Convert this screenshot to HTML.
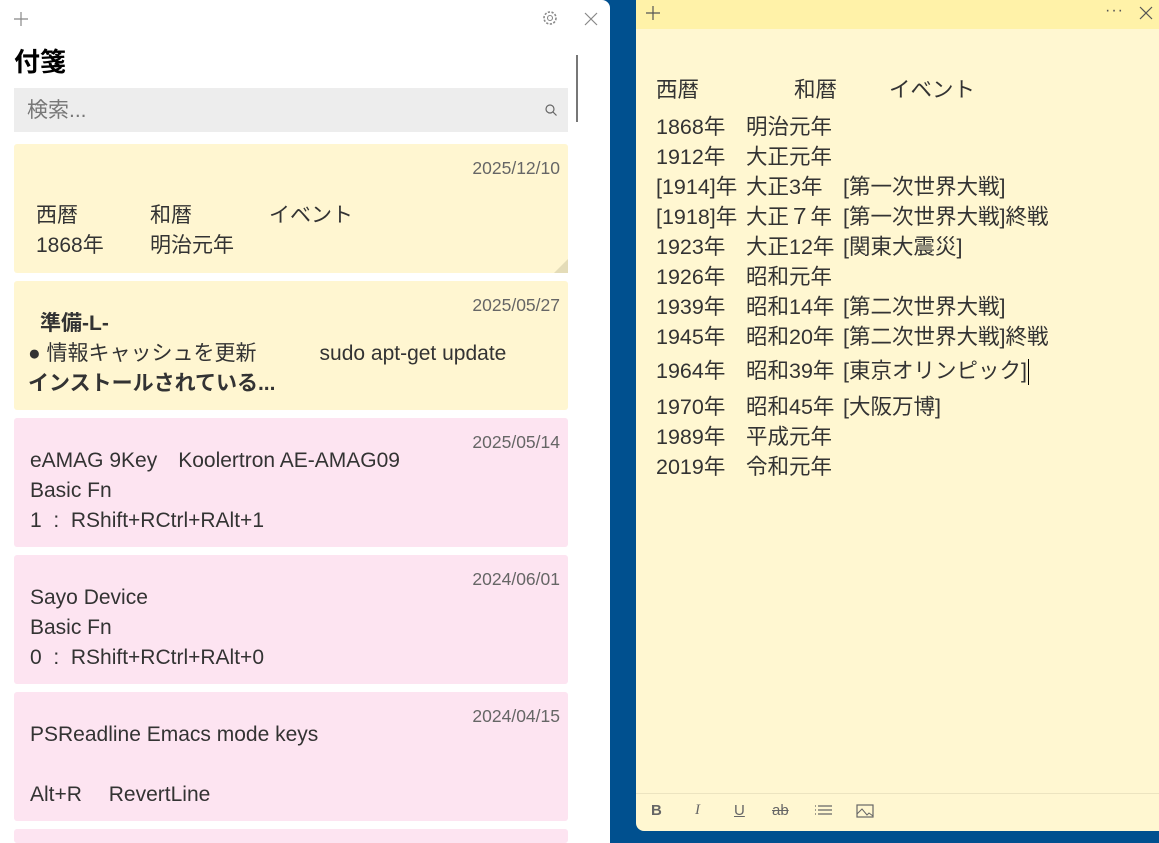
<!DOCTYPE html>
<html><head><meta charset="utf-8"><style>
*{margin:0;padding:0;box-sizing:border-box}
html{width:1159px;height:843px;overflow:hidden}
body{width:1159px;height:843px;overflow:hidden;background:#00508f;font-family:"Liberation Sans","Noto Sans CJK JP",sans-serif;position:relative;color:#333}
.abs{position:absolute;white-space:nowrap}
#left{position:absolute;left:0;top:0;width:610px;height:843px;background:#fff;border-top-right-radius:8px;overflow:hidden}
.card{position:absolute;left:14px;width:554px;height:129px;border-radius:3px}
.y{background:#fff6d1}.p{background:#fde4f1}
.date{position:absolute;right:8px;top:13px;font-size:17.5px;line-height:22px;color:#666}
.t{position:absolute;font-size:21px;line-height:30px;color:#333;white-space:nowrap}
#note{position:absolute;left:636px;top:0;width:523px;height:831px;background:#fff7d1;border-bottom-left-radius:8px}
#nh{height:29px;background:#fff2a8}
.n{position:absolute;font-size:21.5px;line-height:30px;color:#333;white-space:nowrap}
</style></head><body>
<div id="left">
<svg class="abs" style="left:12px;top:10px" width="18" height="18"><path d="M9 2v14M2 9h14" stroke="#888" stroke-width="1.2"/></svg>
<svg class="abs" style="left:541px;top:9px" width="18" height="18" viewBox="0 0 18 18"><circle cx="9" cy="9" r="2.5" fill="none" stroke="#888" stroke-width="1.1"/><circle cx="9" cy="9" r="6" fill="none" stroke="#888" stroke-width="1.6" stroke-dasharray="2.2 1.5"/></svg>
<svg class="abs" style="left:583px;top:11px" width="16" height="16"><path d="M2 2l12 12M14 2L2 14" stroke="#888" stroke-width="1.2"/></svg>
<div class="abs" style="left:14px;top:42px;font-size:26px;font-weight:bold;color:#000">付箋</div>
<div class="abs" style="left:576px;top:55px;width:2px;height:67px;background:#777"></div>
<div class="abs" style="left:14px;top:88px;width:554px;height:44px;background:#ededed"></div>
<div class="abs" style="left:27px;top:96px;font-size:21px;line-height:30px;color:#777">検索...</div>
<svg class="abs" style="left:544px;top:103px" width="14" height="14"><circle cx="6" cy="6" r="4" fill="none" stroke="#666" stroke-width="1.2"/><path d="M9 9l3.5 3.5" stroke="#666" stroke-width="1.2"/></svg>

<div class="card y" style="top:144px"><div class="date">2025/12/10</div>
<div class="t" style="left:22px;top:57px">西暦</div><div class="t" style="left:136px;top:57px">和暦</div><div class="t" style="left:255px;top:57px">イベント</div>
<div class="t" style="left:22px;top:87px">1868年</div><div class="t" style="left:136px;top:87px">明治元年</div>
<svg class="abs" style="right:0;bottom:0" width="14" height="14"><path d="M14 0L0 14H14Z" fill="#e4dcb8"/></svg></div>
<div class="card y" style="top:281px"><div class="date">2025/05/27</div>
<div class="t" style="left:26px;top:28px;font-weight:bold">準備-L-</div>
<div class="t" style="left:14px;top:58px">● 情報キャッシュを更新　　　sudo apt-get update</div>
<div class="t" style="left:14px;top:88px;font-weight:bold">インストールされている...</div></div>
<div class="card p" style="top:418px"><div class="date">2025/05/14</div>
<div class="t" style="left:16px;top:28px">eAMAG 9Key　Koolertron AE-AMAG09</div>
<div class="t" style="left:16px;top:58px">Basic Fn</div>
<div class="t" style="left:16px;top:88px">1&nbsp; :&nbsp; RShift+RCtrl+RAlt+1</div></div>
<div class="card p" style="top:555px"><div class="date">2024/06/01</div>
<div class="t" style="left:16px;top:28px">Sayo Device</div>
<div class="t" style="left:16px;top:58px">Basic Fn</div>
<div class="t" style="left:16px;top:88px">0&nbsp; :&nbsp; RShift+RCtrl+RAlt+0</div></div>
<div class="card p" style="top:692px"><div class="date">2024/04/15</div>
<div class="t" style="left:16px;top:28px">PSReadline Emacs mode keys</div>
<div class="t" style="left:16px;top:88px">Alt+R　 RevertLine</div></div>
<div class="card p" style="top:829px;height:14px"></div>
</div>

<div id="note"><div id="nh"></div>
<svg class="abs" style="left:8px;top:4px" width="18" height="18"><path d="M9 2v14M2 9h14" stroke="#555" stroke-width="1.2"/></svg>
<div class="abs" style="left:469px;top:2px;font-size:16px;color:#555;letter-spacing:1px">···</div>
<svg class="abs" style="left:503px;top:6px" width="14" height="14"><path d="M1 1l12 12M13 1L1 13" stroke="#555" stroke-width="1.2"/></svg>
<div class="abs" style="left:0;top:793px;width:523px;height:1px;background:#ece4c0"></div>
<div class="abs" style="left:15px;top:802px;font-size:15px;font-weight:bold;color:#666">B</div>
<div class="abs" style="left:59px;top:802px;font-size:15px;font-style:italic;color:#666;font-family:'Liberation Serif',serif">I</div>
<div class="abs" style="left:98px;top:802px;font-size:15px;text-decoration:underline;color:#666">U</div>
<div class="abs" style="left:136px;top:802px;font-size:15px;text-decoration:line-through;color:#666">ab</div>
<svg class="abs" style="left:178px;top:804px" width="20" height="14"><path d="M1 2h1M1 6h1M1 10h1M4 2h14M4 6h14M4 10h14" stroke="#666" stroke-width="1.2"/></svg>
<svg class="abs" style="left:220px;top:804px" width="18" height="14"><rect x="1" y="1" width="16" height="12" fill="none" stroke="#666" stroke-width="1.2"/><path d="M1 10l5-5 5 6 2-2 4 3" fill="none" stroke="#666" stroke-width="1"/></svg>
</div>

<div class="n" style="left:656px;top:75px">西暦</div><div class="n" style="left:794px;top:75px">和暦</div><div class="n" style="left:889px;top:75px">イベント</div>
<div class="n" style="left:656px;top:112px">1868年</div><div class="n" style="left:746px;top:112px">明治元年</div>
<div class="n" style="left:656px;top:142px">1912年</div><div class="n" style="left:746px;top:142px">大正元年</div>
<div class="n" style="left:656px;top:172px">[1914]年</div><div class="n" style="left:746px;top:172px">大正3年</div><div class="n" style="left:843px;top:172px">[第一次世界大戦]</div>
<div class="n" style="left:656px;top:202px">[1918]年</div><div class="n" style="left:746px;top:202px">大正７年</div><div class="n" style="left:843px;top:202px">[第一次世界大戦]終戦</div>
<div class="n" style="left:656px;top:232px">1923年</div><div class="n" style="left:746px;top:232px">大正12年</div><div class="n" style="left:843px;top:232px">[関東大震災]</div>
<div class="n" style="left:656px;top:262px">1926年</div><div class="n" style="left:746px;top:262px">昭和元年</div>
<div class="n" style="left:656px;top:292px">1939年</div><div class="n" style="left:746px;top:292px">昭和14年</div><div class="n" style="left:843px;top:292px">[第二次世界大戦]</div>
<div class="n" style="left:656px;top:322px">1945年</div><div class="n" style="left:746px;top:322px">昭和20年</div><div class="n" style="left:843px;top:322px">[第二次世界大戦]終戦</div>
<div class="n" style="left:656px;top:356px">1964年</div><div class="n" style="left:746px;top:356px">昭和39年</div><div class="n" style="left:843px;top:356px">[東京オリンピック]<span style="display:inline-block;width:1px;height:26px;background:#000;vertical-align:middle;margin-left:1px"></span></div>
<div class="n" style="left:656px;top:392px">1970年</div><div class="n" style="left:746px;top:392px">昭和45年</div><div class="n" style="left:843px;top:392px">[大阪万博]</div>
<div class="n" style="left:656px;top:422px">1989年</div><div class="n" style="left:746px;top:422px">平成元年</div>
<div class="n" style="left:656px;top:452px">2019年</div><div class="n" style="left:746px;top:452px">令和元年</div>
</body></html>
